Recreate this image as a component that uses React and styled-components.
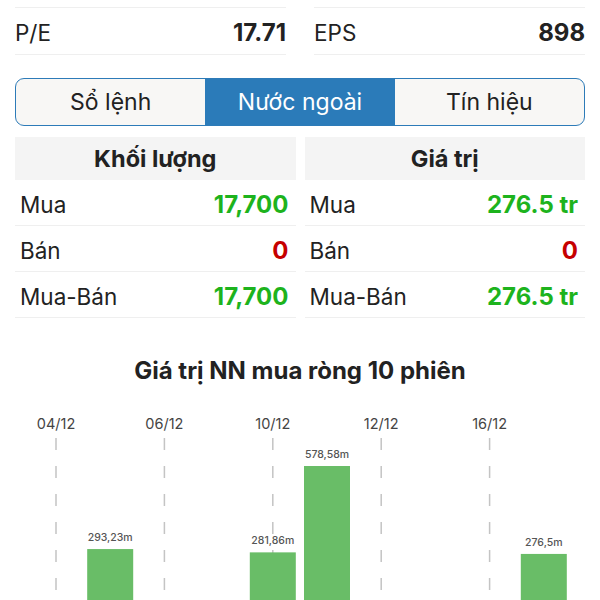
import React from "react";
import styled, { createGlobalStyle } from "styled-components";

const GlobalStyle = createGlobalStyle`
  html, body { margin: 0; padding: 0; background: #fff; }
  body { font-family: Inter, "Noto Sans", sans-serif; color: #222; }
  * { box-sizing: border-box; }
`;

const Page = styled.div`
  width: 600px;
`;

const Content = styled.div`
  padding: 0 15px;
`;

const StatsGrid = styled.div`
  display: grid;
  grid-template-columns: 1fr 1fr;
  column-gap: 28px;
`;

const StatRow = styled.div`
  height: ${(p) => (p.$partial ? "8px" : "47px")};
  padding-top: ${(p) => (p.$partial ? "0" : "3px")};
  border-bottom: 1px solid #efefef;
  display: flex;
  align-items: center;
  justify-content: space-between;
  font-size: 22.5px;
  color: #222;
`;

const StatValue = styled.span`
  font-weight: 700;
  font-size: 24px;
`;

const Segmented = styled.div`
  margin-top: 23px;
  height: 48px;
  display: grid;
  grid-template-columns: 1fr 1fr 1fr;
  border: 1.5px solid #2d7bb8;
  border-radius: 9px;
  overflow: hidden;
  background: #f8f7f5;
`;

const Segment = styled.div`
  display: flex;
  align-items: center;
  justify-content: center;
  font-size: 23px;
  color: ${(p) => (p.$active ? "#fff" : "#222")};
  background: ${(p) => (p.$active ? "#2b7bb9" : "transparent")};
`;

const Tables = styled.div`
  margin-top: 11px;
  display: grid;
  grid-template-columns: 1fr 1fr;
  column-gap: 9px;
`;

const Table = styled.div`
  display: flex;
  flex-direction: column;
`;

const TableHead = styled.div`
  height: 43px;
  background: #f4f4f4;
  display: flex;
  align-items: center;
  justify-content: center;
  font-size: 23.5px;
  font-weight: 700;
  color: #222;
`;

const TableRow = styled.div`
  height: 46px;
  padding: 3px 7px 0 5px;
  border-bottom: 1px solid #efefef;
  display: flex;
  align-items: center;
  justify-content: space-between;
  font-size: 22.5px;
  color: #222;
`;

const Num = styled.span`
  font-weight: 700;
  font-size: 24px;
  color: ${(p) => (p.$tone === "down" ? "#c60000" : "#1db31d")};
`;

const ChartTitle = styled.div`
  padding-top: 39px;
  line-height: 28px;
  text-align: center;
  font-size: 24px;
  font-weight: 700;
  color: #222;
`;

const ChartSvg = styled.svg`
  display: block;
`;

const stats = [
  { l: "P/E", v: "17.71" },
  { l: "EPS", v: "898" },
];

const tables = [
  {
    title: "Khối lượng",
    rows: [
      ["Mua", "17,700", "up"],
      ["Bán", "0", "down"],
      ["Mua-Bán", "17,700", "up"],
    ],
  },
  {
    title: "Giá trị",
    rows: [
      ["Mua", "276.5 tr", "up"],
      ["Bán", "0", "down"],
      ["Mua-Bán", "276.5 tr", "up"],
    ],
  },
];

const sessions = [
  { d: "04/12", v: 0 },
  { d: "05/12", v: 293.23, t: "293,23m" },
  { d: "06/12", v: 0 },
  { d: "09/12", v: 0 },
  { d: "10/12", v: 281.86, t: "281,86m" },
  { d: "11/12", v: 578.58, t: "578,58m" },
  { d: "12/12", v: 0 },
  { d: "13/12", v: 0 },
  { d: "16/12", v: 0 },
  { d: "17/12", v: 276.5, t: "276,5m" },
];

function Chart() {
  const base = 249.4;
  const scale = 3.436;
  const x0 = 56;
  const step = 54.2;
  return (
    <ChartSvg width="600" height="260" viewBox="0 0 600 260">
      {sessions.map((s, i) =>
        i % 2 === 0 ? (
          <g key={s.d}>
            <text
              x={x0 + step * i}
              y={44}
              textAnchor="middle"
              fontSize="14.5"
              fill="#444"
              fontFamily="Inter, sans-serif"
            >
              {s.d}
            </text>
            <line
              x1={x0 + step * i}
              x2={x0 + step * i}
              y1={53}
              y2={260}
              stroke="#c4c4c4"
              strokeWidth="1.5"
              strokeDasharray="12 16"
            />
          </g>
        ) : null
      )}
      {sessions.map((s, i) => {
        if (!s.v) return null;
        const cx = x0 + step * i;
        const top = base - s.v / scale;
        return (
          <g key={"b" + s.d}>
            <rect x={cx - 23} y={top} width={46} height={base - top} fill="#69bd67" />
            <text
              x={cx}
              y={top - 8}
              textAnchor="middle"
              fontSize="10.5"
              fontWeight="500"
              fill="#555"
              fontFamily="Inter, sans-serif"
            >
              {s.t}
            </text>
          </g>
        );
      })}
    </ChartSvg>
  );
}

export default function App() {
  return (
    <Page>
      <GlobalStyle />
      <Content>
        <StatsGrid>
          <StatRow $partial />
          <StatRow $partial />
          {stats.map((s) => (
            <StatRow key={s.l}>
              <span>{s.l}</span>
              <StatValue>{s.v}</StatValue>
            </StatRow>
          ))}
        </StatsGrid>
        <Segmented>
          <Segment>Sổ lệnh</Segment>
          <Segment $active>Nước ngoài</Segment>
          <Segment>Tín hiệu</Segment>
        </Segmented>
        <Tables>
          {tables.map((t) => (
            <Table key={t.title}>
              <TableHead>{t.title}</TableHead>
              {t.rows.map(([l, v, tone]) => (
                <TableRow key={l}>
                  <span>{l}</span>
                  <Num $tone={tone}>{v}</Num>
                </TableRow>
              ))}
            </Table>
          ))}
        </Tables>
      </Content>
      <ChartTitle>Giá trị NN mua ròng 10 phiên</ChartTitle>
      <Chart />
    </Page>
  );
}
